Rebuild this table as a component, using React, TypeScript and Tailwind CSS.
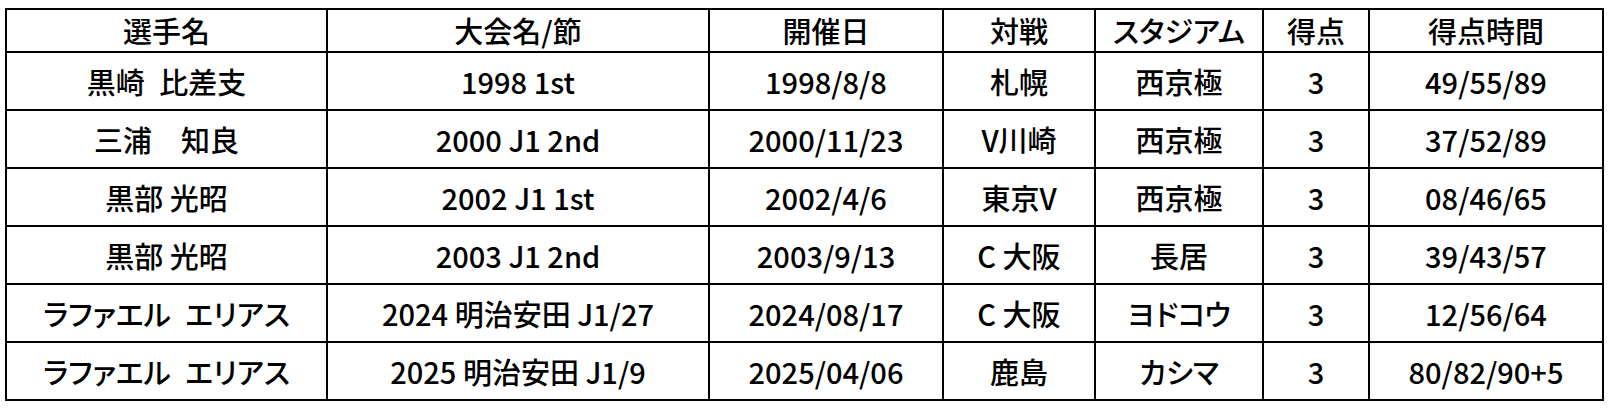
const HEADERS = ['選手名', '大会名/節', '開催日', '対戦', 'スタジアム', '得点', '得点時間'];

const ROWS = [
  ['黒崎\u2002比差支', '1998 1st', '1998/8/8', '札幌', '西京極', '3', '49/55/89'],
  ['三浦\u3000知良', '2000 J1 2nd', '2000/11/23', 'V川崎', '西京極', '3', '37/52/89'],
  ['黒部 光昭', '2002 J1 1st', '2002/4/6', '東京V', '西京極', '3', '08/46/65'],
  ['黒部 光昭', '2003 J1 2nd', '2003/9/13', 'C 大阪', '長居', '3', '39/43/57'],
  ['ラファエル\u2002エリアス', '2024 明治安田 J1/27', '2024/08/17', 'C 大阪', 'ヨドコウ', '3', '12/56/64'],
  ['ラファエル\u2002エリアス', '2025 明治安田 J1/9', '2025/04/06', '鹿島', 'カシマ', '3', '80/82/90+5'],
];

const WIDTHS = ['w-[321px]', 'w-[382px]', 'w-[234px]', 'w-[152px]', 'w-[168px]', 'w-[106px]', 'w-[234px]'];

export default function App() {
  return (
    <div className="w-[1610px] h-[408px] bg-white pt-[8px] pl-[5px]">
      <table className="table-fixed border-collapse border-2 border-black text-black text-[29px] leading-none font-medium font-['Noto_Sans_CJK_JP',sans-serif] [font-feature-settings:'palt']">
        <colgroup>
          {WIDTHS.map((w, i) => (
            <col key={i} className={w} />
          ))}
        </colgroup>
        <thead>
          <tr className="h-[43px]">
            {HEADERS.map((h) => (
              <th key={h} className="border-2 border-black font-medium text-center p-0 whitespace-pre">
                {h}
              </th>
            ))}
          </tr>
        </thead>
        <tbody>
          {ROWS.map((row, r) => (
            <tr key={r} className="h-[58px]">
              {row.map((cell, c) => (
                <td key={c} className="border-2 border-black text-center p-0 whitespace-pre">
                  {cell}
                </td>
              ))}
            </tr>
          ))}
        </tbody>
      </table>
    </div>
  );
}
